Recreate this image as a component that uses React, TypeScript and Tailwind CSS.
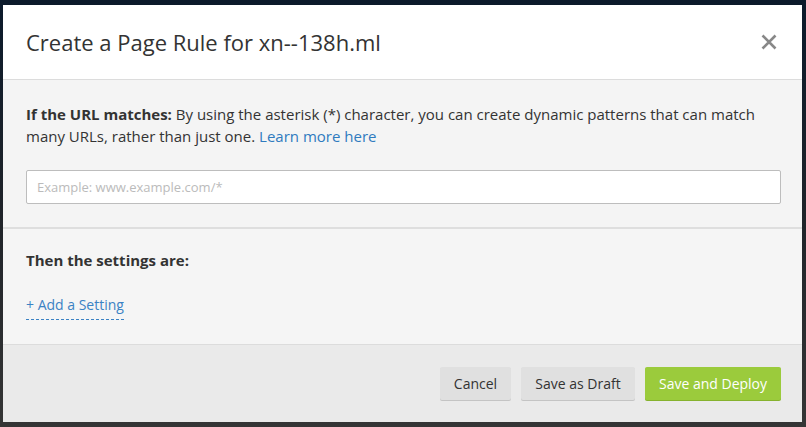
import React from "react";

export default function App() {
  return (
    <div
      className="w-[806px] h-[427px] overflow-hidden bg-gradient-to-b from-[#0b1a2b] via-[#1f2329] to-[#353535] pt-[5px] pl-[3px]"
      style={{ fontFamily: '"Open Sans", "Liberation Sans", sans-serif' }}
    >
      <div className="w-[799px] flex flex-col text-[#333]">
        {/* Header */}
        <div className="bg-white h-[75px] border-b border-[#dcdcdc] flex items-center justify-between pl-[23px] pr-[25px]">
          <h1 className="text-[22px] leading-[30px] text-[#333] font-normal">
            Create a Page Rule for xn--138h.ml
          </h1>
          <svg width="16" height="16" viewBox="0 0 16 16" className="mb-[1px]">
            <path d="M1.5 1.5 L14.5 14.5 M14.5 1.5 L1.5 14.5" stroke="#888" strokeWidth="2.6" strokeLinecap="butt" />
          </svg>
        </div>

        {/* Section 1 */}
        <div className="bg-[#f4f4f4] pt-[23px] pb-[23px] pl-[23px] pr-[21px] border-b-2 border-[#dedede]">
          <p className="text-[15px] leading-[22px]">
            <span className="font-bold">If the URL matches:</span> By using the asterisk (*) character, you can create dynamic patterns that can match many URLs, rather than just one.{" "}
            <a className="text-[#2f7bbf]" href="#">Learn more here</a>
          </p>
          <input
            className="mt-[23px] w-full h-[34px] bg-white border border-[#bdbdbd] rounded-[2px] px-[10px] text-[13px] text-[#333] placeholder:text-[#bbb] outline-none"
            placeholder="Example: www.example.com/*"
          />
        </div>

        {/* Section 2 */}
        <div className="bg-[#f5f5f5] pt-[20px] pb-[24px] pl-[23px] pr-[21px] border-b border-[#dcdcdc] flex flex-col items-start">
          <p className="text-[15px] leading-[22px] font-bold">Then the settings are:</p>
          <a
            href="#"
            className="mt-[23px] text-[14px] leading-[22px] text-[#3b82c4] border-b border-dashed border-[#3b82c4] pb-[3px]"
          >
            + Add a Setting
          </a>
        </div>

        {/* Footer */}
        <div className="bg-[#eaeaea] h-[77px] flex items-center justify-end gap-[10px] pr-[21px]">
          <button className="h-[33px] w-[71px] bg-[#e0e0e0] text-[14px] text-[#333] rounded-[2px] shadow-[0_1px_0_#c4c4c4]">
            Cancel
          </button>
          <button className="h-[33px] w-[114px] bg-[#e0e0e0] text-[14px] text-[#333] rounded-[2px] shadow-[0_1px_0_#c4c4c4]">
            Save as Draft
          </button>
          <button className="h-[33px] w-[136px] bg-[#9bcb3c] text-[14px] text-white rounded-[2px] shadow-[0_1px_0_#86b22e]">
            Save and Deploy
          </button>
        </div>
      </div>
    </div>
  );
}
